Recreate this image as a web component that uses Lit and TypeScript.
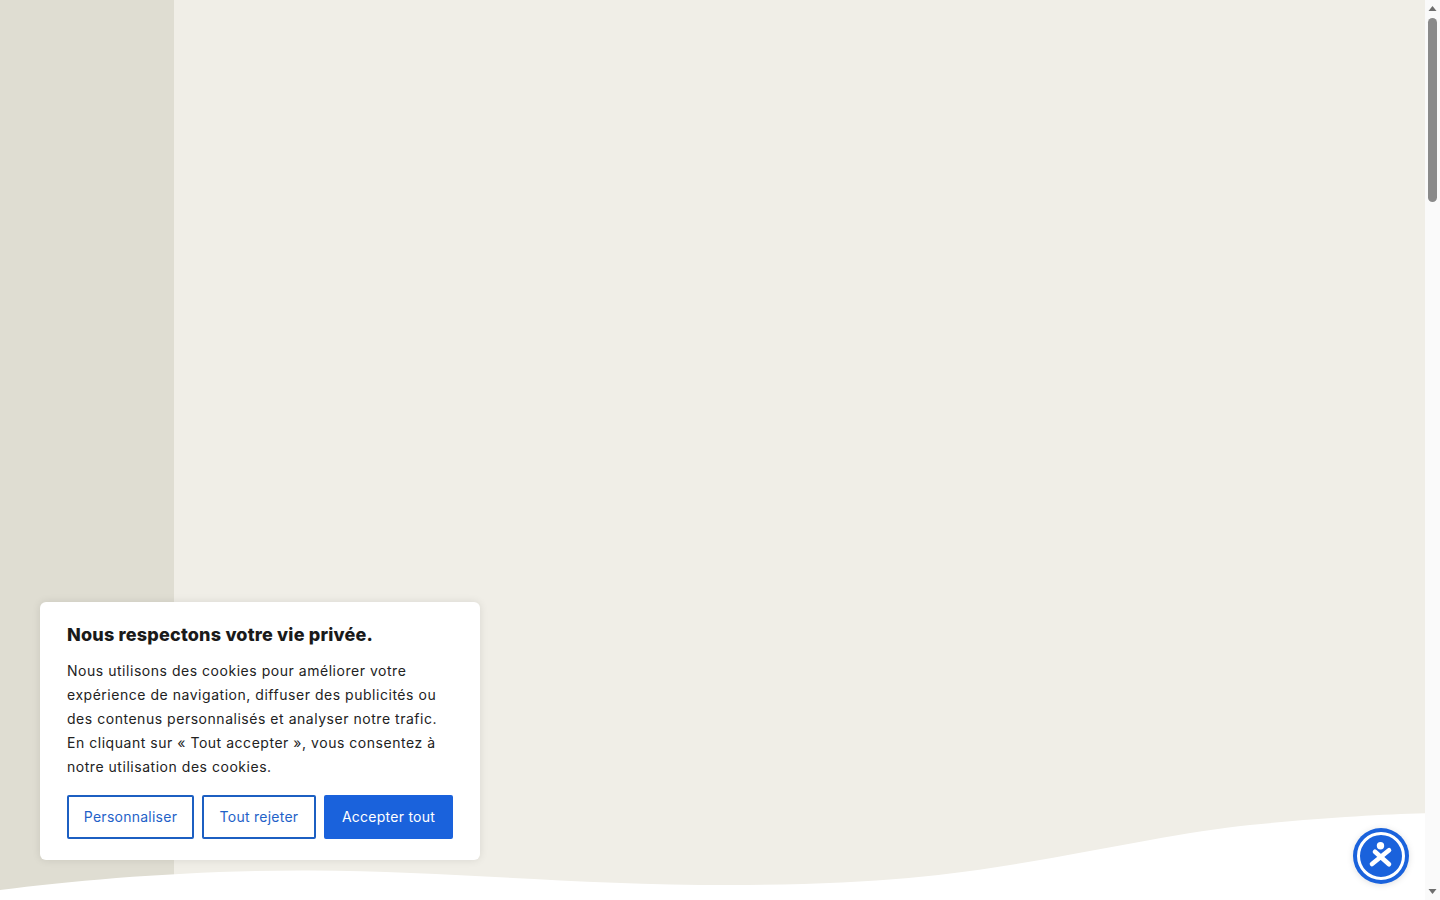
import { LitElement, html, css } from "lit";
import { customElement } from "lit/decorators.js";

@customElement("app-root")
export class AppRoot extends LitElement {
  static styles = css`
    :host {
      display: flex;
      height: 100vh;
      overflow: hidden;
      background: #ffffff;
      font-family: "Inter", "Open Sans", sans-serif;
    }
    .page {
      flex: 1;
      position: relative;
      display: flex;
      background: #f0eee7;
      overflow: hidden;
    }
    .aside {
      width: 174px;
      background: #dfddd2;
    }
    .wave {
      position: absolute;
      left: 0;
      bottom: 0;
      width: 1425px;
      height: 100px;
      display: block;
    }
    .cookie {
      position: absolute;
      left: 40px;
      top: 602px;
      width: 440px;
      height: 258px;
      box-sizing: border-box;
      padding: 22px 27px 21px;
      background: #fff;
      border-radius: 6px;
      box-shadow: 0 0 8px rgba(0, 0, 0, 0.1);
      display: flex;
      flex-direction: column;
      color: #1a1a1a;
    }
    .cookie h2 {
      margin: 0;
      font-size: 18px;
      line-height: 22px;
      font-weight: 800;
      letter-spacing: 0.19px;
    }
    .cookie p {
      margin: 13px 0 0;
      font-size: 14px;
      line-height: 24px;
      letter-spacing: 0.53px;
      color: #222;
    }
    .actions {
      margin-top: 16px;
      display: grid;
      grid-template-columns: 127px 114px 129px;
      gap: 8px;
    }
    .btn {
      height: 44px;
      box-sizing: border-box;
      border: 2px solid #1c5fc2;
      border-radius: 2px;
      background: #fff;
      color: #1f62c8;
      font: inherit;
      font-size: 14px;
      letter-spacing: 0.25px;
      padding: 0 0 2px;
    }
    .btn.primary {
      border-color: #1a62dc;
      background: #1a62dc;
      color: #fff;
    }
    .a11y {
      position: absolute;
      left: 1353px;
      top: 828px;
      width: 56px;
      height: 56px;
      display: block;
      filter: drop-shadow(0 1px 3px rgba(0, 0, 0, 0.12));
    }
    .scrollbar {
      width: 15px;
      background: #fafafa;
      display: flex;
      flex-direction: column;
      align-items: center;
      flex: none;
    }
    .arrow {
      height: 17px;
      width: 15px;
      display: block;
      flex: none;
    }
    .thumb {
      width: 9px;
      height: 184px;
      margin-top: 1px;
      background: #8a8a8a;
      border-radius: 5px;
      flex: none;
    }
    .spacer {
      flex: 1;
    }
  `;

  render() {
    return html`
      <main class="page">
        <div class="aside"></div>
        <svg class="wave" viewBox="0 0 1425 100" preserveAspectRatio="none">
          <path
            fill="#ffffff"
            d="M0 90 C 80 80, 190 70, 310 70.5 C 450 71, 570 85, 730 85 C 880 85, 960 74, 1040 60 C 1110 48, 1190 31, 1250 25 C 1320 18, 1380 14.5, 1425 13.3 L1425 100 L0 100 Z"
          />
        </svg>
        <section class="cookie">
          <h2>Nous respectons votre vie privée.</h2>
          <p>
            Nous utilisons des cookies pour améliorer votre<br />
            expérience de navigation, diffuser des publicités ou<br />
            des contenus personnalisés et analyser notre trafic.<br />
            En cliquant sur « Tout accepter », vous consentez à<br />
            notre utilisation des cookies.
          </p>
          <div class="actions">
            <button class="btn">Personnaliser</button>
            <button class="btn">Tout rejeter</button>
            <button class="btn primary">Accepter tout</button>
          </div>
        </section>
        <svg class="a11y" viewBox="0 0 56 56">
          <circle cx="28" cy="28" r="28" fill="#1a62dc" />
          <circle cx="28" cy="28" r="22.5" fill="none" stroke="#fff" stroke-width="3" />
          <circle cx="27.5" cy="17.7" r="3.7" fill="#fff" />
          <path d="M19 36 L36 22.2 M22 23.7 L36 36.2" stroke="#fff" stroke-width="4.6" stroke-linecap="round" />
        </svg>
      </main>
      <div class="scrollbar" aria-hidden="true">
        <svg class="arrow" viewBox="0 0 15 17"><path d="M3.5 11 L7.5 6 L11.5 11 Z" fill="#6e6e6e" /></svg>
        <div class="thumb"></div>
        <div class="spacer"></div>
        <svg class="arrow" viewBox="0 0 15 17"><path d="M3.5 6 L7.5 11 L11.5 6 Z" fill="#6e6e6e" /></svg>
      </div>
    `;
  }
}
